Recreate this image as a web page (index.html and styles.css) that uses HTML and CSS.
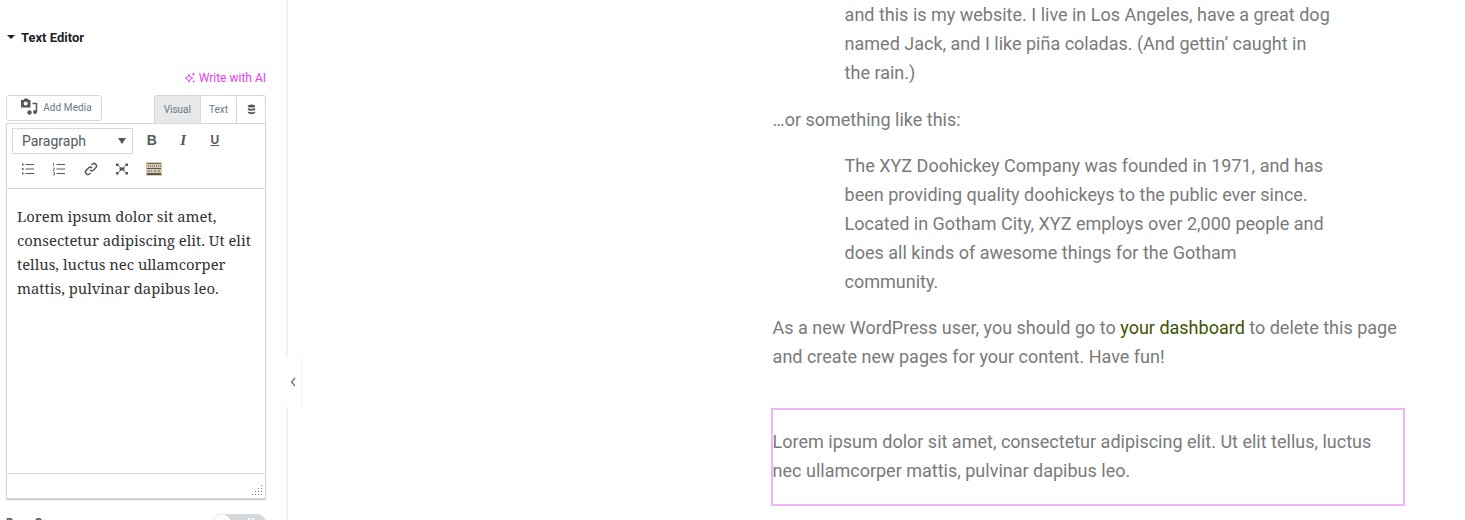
FILE: index.html
```html
<!DOCTYPE html>
<html lang="en">
<head>
    <meta charset="UTF-8">
    <title>Text Editor</title>
    <link rel="stylesheet" href="styles.css">
</head>
<body>
    <aside class="panel">
        <div class="section-title">
            <span class="caret"></span>
            Text Editor
        </div>
        <div class="ai-row">
            <svg class="ai-icon" viewBox="0 0 12 12">
                <path d="M5 2.500 6.200 5 8.700 6.200 6.200 7.400 5 10 3.800 7.400 1.300 6.200 3.800 5Z"></path>
                <path d="M9.500 1v2.400M8.300 2.200h2.400M9.700 8.600v1.800M8.800 9.500h1.800"></path>
            </svg>
            Write with AI
        </div>
        <div class="editor-tabs">
            <button class="add-media">
                <svg class="media-icon" viewBox="0 0 18 18">
                    <path d="M1 2h2.500l1-1.500h3l1 1.500H10.500v7.500H1Z" fill="#55595c"></path>
                    <circle cx="5.700" cy="5.500" r="2" fill="#fff"></circle>
                    <path d="M12.500 5.500H16.500V14" class="media-note"></path>
                    <circle cx="9.500" cy="14.500" r="2.200" fill="#55595c"></circle>
                    <circle cx="15" cy="14" r="2" fill="#55595c"></circle>
                </svg>
                Add Media
            </button>
            <div class="tabs">
                <span class="tab tab-active">Visual</span>
                <span class="tab">Text</span>
                <span class="tab tab-db">
                    <svg class="db-icon" viewBox="0 0 12 12">
                        <ellipse cx="6" cy="2.200" rx="4" ry="1.700"></ellipse>
                        <path d="M2 4.200c1 1.500 7 1.500 8 0v2c-1 1.500-7 1.500-8 0Z"></path>
                        <path d="M2 7.800c1 1.500 7 1.500 8 0v1.800c-1 2-7 2-8 0Z"></path>
                    </svg>
                </span>
            </div>
        </div>
        <div class="editor">
            <div class="toolbar">
                <div class="toolbar-row">
                    <div class="format-select">
                        Paragraph
                        <span class="select-arrow"></span>
                    </div>
                    <span class="tool tool-text tool-b">B</span>
                    <span class="tool tool-text tool-i">I</span>
                    <span class="tool tool-text tool-u">U</span>
                </div>
                <div class="toolbar-row toolbar-row-2">
                    <span class="tool">
                        <svg class="tool-icon" viewBox="0 0 14 14">
                            <path d="M4.500 2.500H13M4.500 7H13M4.500 11.500H13"></path>
                            <path d="M1 2.500h1.500M1 7h1.500M1 11.500h1.500" class="thick"></path>
                        </svg>
                    </span>
                    <span class="tool">
                        <svg class="tool-icon" viewBox="0 0 14 14">
                            <path d="M4.500 2.500H13M4.500 7H13M4.500 11.500H13"></path>
                            <path d="M1.500 1v3M1 6h1.500L1 8.500h1.500M1 10.500h1.500v2.500H1" class="thin"></path>
                        </svg>
                    </span>
                    <span class="tool">
                        <svg class="tool-icon tool-link" viewBox="0 0 14 14">
                            <path d="M6 8a2.500 2.500 0 0 0 3.500 0l2.500-2.500A2.500 2.500 0 0 0 8.500 2L7.500 3"></path>
                            <path d="M8 6a2.500 2.500 0 0 0-3.500 0L2 8.500A2.500 2.500 0 0 0 5.500 12l1-1"></path>
                        </svg>
                    </span>
                    <span class="tool">
                        <svg class="tool-icon" viewBox="0 0 14 14">
                            <path d="M3 3 11 11M11 3 3 11" class="thin"></path>
                            <rect x="4.500" y="5.500" width="5" height="3" fill="#55595c" stroke="none"></rect>
                            <rect x="1" y="1.500" width="2.500" height="2.500" fill="#55595c" stroke="none"></rect>
                            <rect x="10.500" y="1.500" width="2.500" height="2.500" fill="#55595c" stroke="none"></rect>
                            <rect x="1" y="10" width="2.500" height="2.500" fill="#55595c" stroke="none"></rect>
                            <rect x="10.500" y="10" width="2.500" height="2.500" fill="#55595c" stroke="none"></rect>
                        </svg>
                    </span>
                    <span class="tool">
                        <svg class="kitchen-icon" viewBox="0 0 16 14">
                            <rect x="0" y="0" width="16" height="14" fill="#d9c9a8"></rect>
                            <rect x="1" y="1" width="14" height="1" fill="#6b6f73"></rect>
                            <path d="M2 4h1M4 4h1M6 4h1M8 4h1M10 4h1M12 4h1M14 4h1" stroke="#55595c"></path>
                            <rect x="1" y="6" width="14" height="1" fill="#55595c"></rect>
                            <path d="M2 9h2M5 9h1M8 9h2M12 9h2" stroke="#55595c"></path>
                            <rect x="1" y="11" width="14" height="2" fill="#55595c"></rect>
                        </svg>
                    </span>
                </div>
            </div>
            <div class="editor-body">
                Lorem ipsum dolor sit amet, consectetur adipiscing elit. Ut elit tellus, luctus nec ullamcorper mattis, pulvinar dapibus leo.
            </div>
            <div class="editor-status">
                <svg class="resize-grip" viewBox="0 0 10 10">
                    <path d="M9 0h1v1H9ZM9 3h1v1H9ZM6 3h1v1H6ZM9 6h1v1H9ZM6 6h1v1H6ZM3 6h1v1H3ZM9 9h1v1H9ZM6 9h1v1H6ZM3 9h1v1H3ZM0 9h1v1H0Z"></path>
                </svg>
            </div>
        </div>
        <div class="drop-row">
            <span class="drop-label">Drop Cap</span>
            <span class="switch"><span class="switch-knob"></span><span class="switch-text">No</span></span>
        </div>
    </aside>

    <button class="collapse-tab">
        <svg class="collapse-icon" viewBox="0 0 6 10">
            <path d="M5 1 1.500 5 5 9"></path>
        </svg>
    </button>

    <main class="preview">
        <div class="page-text">
            <blockquote class="quote quote-first">and this is my website. I live in Los Angeles, have a great dog named Jack, and I like piña coladas. (And gettin’ caught in the rain.)</blockquote>
            <p class="para">…or something like this:</p>
            <blockquote class="quote">The XYZ Doohickey Company was founded in 1971, and has been providing quality doohickeys to the public ever since. Located in Gotham City, XYZ employs over 2,000 people and does all kinds of awesome things for the Gotham community.</blockquote>
            <p class="para">As a new WordPress user, you should go to <a class="page-link" href="#">your dashboard</a> to delete this page and create new pages for your content. Have fun!</p>
        </div>
        <div class="widget-selected">
            <p class="para">Lorem ipsum dolor sit amet, consectetur adipiscing elit. Ut elit tellus, luctus nec ullamcorper mattis, pulvinar dapibus leo.</p>
        </div>
    </main>
</body>
</html>
```

FILE: styles.css
```css
* {
    margin: 0;
    padding: 0;
    box-sizing: border-box;
}

body {
    height: 520px;
    overflow: hidden;
    display: flex;
    position: relative;
    background: #fff;
    font-family: Roboto, "Liberation Sans", sans-serif;
}

/* Left panel */
.panel {
    width: 288px;
    flex-shrink: 0;
    height: 520px;
    padding: 29px 20px 0 6px;
    border-right: 2px solid #f1f2f3;
    overflow: hidden;
}

.section-title {
    display: flex;
    align-items: center;
    gap: 6px;
    height: 16px;
    padding-left: 1px;
    font-size: 13px;
    font-weight: 700;
    color: #1f2124;
}

.caret {
    width: 0;
    height: 0;
    border-left: 4px solid transparent;
    border-right: 4px solid transparent;
    border-top: 4px solid #1f2124;
}

.ai-row {
    display: flex;
    justify-content: flex-end;
    align-items: center;
    gap: 3px;
    margin-top: 25px;
    height: 16px;
    font-size: 12px;
    color: #e73cf0;
}

.ai-icon {
    width: 12px;
    height: 12px;
    fill: none;
    stroke: #e73cf0;
    stroke-width: 1;
}

.editor-tabs {
    display: flex;
    justify-content: space-between;
    align-items: flex-start;
    margin-top: 9px;
    height: 28px;
}

.add-media {
    width: 96px;
    height: 26px;
    padding: 0 0 2px 4px;
    display: flex;
    align-items: center;
    justify-content: center;
    gap: 5px;
    background: #fff;
    border: 1px solid #d5d8dc;
    border-radius: 3px;
    font-family: Roboto, sans-serif;
    font-size: 10px;
    letter-spacing: 0.1px;
    color: #6d7882;
}

.media-icon {
    width: 18px;
    height: 18px;
}

.media-note {
    fill: none;
    stroke: #55595c;
    stroke-width: 1.500;
}

.tabs {
    display: flex;
    width: 112px;
    height: 28px;
    border: 1px solid #d5d8dc;
    border-bottom: none;
    border-radius: 3px 3px 0 0;
    font-size: 10px;
    color: #6d7882;
}

.tab {
    width: 37px;
    display: flex;
    align-items: center;
    justify-content: center;
    border-right: 1px solid #d5d8dc;
}

.tab-active {
    width: 46px;
    background: #e6e8ea;
}

.tab-db {
    width: 28px;
    border-right: none;
}

.db-icon {
    width: 11px;
    height: 11px;
    fill: #55595c;
}

.editor {
    width: 260px;
    height: 376px;
    border: 1px solid #d5d8dc;
    box-shadow: 0 1px 1px #c8cbce;
    display: flex;
    flex-direction: column;
}

.toolbar {
    height: 65px;
    padding: 4px 5px 0;
    border-bottom: 1px solid #d5d8dc;
}

.toolbar-row {
    display: flex;
    align-items: center;
    height: 26px;
}

.toolbar-row-2 {
    margin-top: 2px;
}

.format-select {
    width: 121px;
    height: 26px;
    padding-left: 9px;
    display: flex;
    align-items: center;
    justify-content: space-between;
    border: 1px solid #d5d8dc;
    font-size: 14px;
    color: #55595c;
    margin-right: 3px;
}

.select-arrow {
    margin-right: 6px;
    border-left: 4px solid transparent;
    border-right: 4px solid transparent;
    border-top: 6px solid #55595c;
}

.tool {
    width: 31.500px;
    display: flex;
    align-items: center;
    justify-content: center;
}

.tool-text {
    font-family: "Liberation Sans", sans-serif;
    font-size: 14px;
    font-weight: 700;
    color: #55595c;
    padding-bottom: 2px;
}

.tool-i {
    font-style: italic;
    font-family: "Liberation Serif", serif;
    font-size: 15px;
}

.tool-u {
    text-decoration: underline;
    font-size: 12px;
}

.tool-icon {
    width: 14px;
    height: 14px;
    fill: none;
    stroke: #55595c;
    stroke-width: 1;
}

.thick {
    stroke-width: 1.800;
}

.thin {
    stroke-width: 0.800;
}

.tool-link {
    stroke-width: 1.500;
}

.kitchen-icon {
    width: 16px;
    height: 14px;
}

.editor-body {
    flex: 1;
    padding: 15px 10px 0;
    font-family: "Noto Serif", Georgia, "DejaVu Serif", serif;
    font-size: 14.800px;
    line-height: 24px;
    color: #333;
}

.editor-status {
    height: 25px;
    border-top: 1px solid #d5d8dc;
    display: flex;
    justify-content: flex-end;
    align-items: flex-end;
    padding: 0 3px 3px 0;
}

.resize-grip {
    width: 10px;
    height: 10px;
    fill: #6a7f4a;
}

.drop-row {
    display: flex;
    justify-content: space-between;
    align-items: flex-start;
    width: 260px;
    margin-top: 15px;
    font-size: 12px;
    font-weight: 700;
    color: #55595c;
}

.drop-label {
    padding-top: 2px;
}

.switch {
    width: 53px;
    height: 18px;
    border-radius: 9px;
    background: #d5d8dc;
    position: relative;
    font-size: 9px;
    color: #fff;
    text-align: right;
    padding-right: 7px;
    line-height: 16px;
}

.switch-knob {
    position: absolute;
    left: 0;
    top: 0;
    width: 18px;
    height: 18px;
    border-radius: 50%;
    background: #fff;
    box-shadow: 0 0 1px #aaa;
}

/* Collapse handle */
.collapse-tab {
    position: absolute;
    left: 286px;
    top: 357px;
    width: 15px;
    height: 50px;
    padding-right: 2px;
    display: flex;
    align-items: center;
    justify-content: center;
    background: #fff;
    border: none;
    box-shadow: 1px 0 2px rgba(0, 0, 0, 0.06);
}

.collapse-icon {
    width: 6px;
    height: 10px;
    fill: none;
    stroke: #6d7882;
    stroke-width: 1.400;
}

/* Page preview */
.preview {
    flex: 1;
    padding-left: 484.600px;
    font-size: 18px;
    line-height: 29px;
    color: #7a7a7a;
}

.page-text {
    width: 632px;
}

.para {
    margin-bottom: 17px;
}

.quote {
    margin: 17px 72px 17px 72px;
}

.quote-first {
    margin: 0 72px 18px 72px;
}

.page-link {
    color: #3f5200;
    text-decoration: none;
}

.widget-selected {
    width: 634px;
    height: 98px;
    margin: 37px 0 0 -2px;
    padding-top: 17px;
    border: 2px solid #f3b3fb;
}

.widget-selected .para {
    margin: 0;
}
```
